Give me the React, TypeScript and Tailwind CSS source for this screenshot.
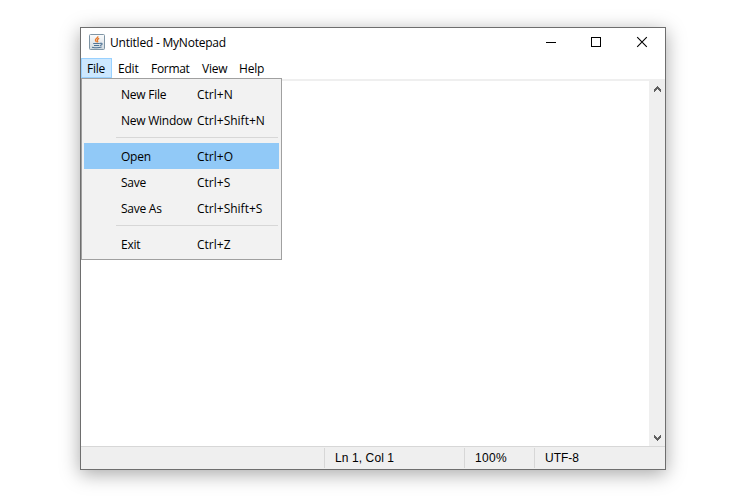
const ui = "font-['Open_Sans','Noto_Sans',sans-serif]";

type Entry = { label: string; keys: string; active?: boolean };

const groups: Entry[][] = [
  [
    { label: 'New File', keys: 'Ctrl+N' },
    { label: 'New Window', keys: 'Ctrl+Shift+N' },
  ],
  [
    { label: 'Open', keys: 'Ctrl+O', active: true },
    { label: 'Save', keys: 'Ctrl+S' },
    { label: 'Save As', keys: 'Ctrl+Shift+S' },
  ],
  [{ label: 'Exit', keys: 'Ctrl+Z' }],
];

function JavaIcon() {
  return (
    <svg width="16" height="16" viewBox="0 0 16 16" fill="none" className="mb-[1px] block">
      <defs>
        <linearGradient id="tile" x1="0" y1="0" x2="0" y2="1">
          <stop offset="0" stopColor="#fbfcfd" />
          <stop offset="1" stopColor="#cfd8df" />
        </linearGradient>
      </defs>
      <rect x=".5" y=".5" width="15" height="15" rx="1" fill="url(#tile)" stroke="#7f95a5" />
      <path d="M8.8 2.2C9.4 4 6.2 4.4 6.4 6.2C6.6 7 7.2 7.4 7.4 8.2M10.2 4.4C8.6 5 7.8 6 8.6 7C9 7.6 8.7 8 8.4 8.4" stroke="#e87a2c" strokeWidth="1.3" />
      <path d="M4.2 9.5H10.6M5 11.5H10.2M3 13.2C5.6 13.8 10.4 13.8 12.6 13M10.8 9.4C14 8.5 13.8 11 11 11.5" stroke="#4f7496" strokeWidth="1.1" />
    </svg>
  );
}

function TitleBar() {
  return (
    <div className="flex h-[29px] items-center pl-2">
      <JavaIcon />
      <span className={`${ui} ml-[5px] mt-px text-[12px] leading-[16px] tracking-[-0.22px]`}>Untitled - MyNotepad</span>
      <svg width="138" height="29" viewBox="0 0 138 29" fill="none" stroke="#000" className="ml-auto" shapeRendering="crispEdges">
        <path d="M19 14.5h10" />
        <rect x="64.5" y="9.5" width="9" height="9" />
        <path d="M110.2 9.2l9.6 9.6M119.8 9.2l-9.6 9.6" shapeRendering="auto" strokeWidth="1.1" />
      </svg>
    </div>
  );
}

function FileMenu() {
  return (
    <div className="absolute left-0 top-[21px] w-[201px] border border-[#a0a0a0] bg-[#f2f2f2] p-[2px]">
      {groups.map((group, i) => (
        <div key={i}>
          {i > 0 && (
            <div className="h-[10px] pl-8 pr-px pt-1">
              <div className="h-px bg-[#d7d7d7]" />
            </div>
          )}
          {group.map((e) => (
            <div key={e.label} className={`flex h-[26px] w-[195px] items-center whitespace-nowrap pl-[37px] pt-[2px] ${e.active ? 'bg-[#91c9f7]' : ''}`}>
              <span className="w-[76px] tracking-[-0.25px]">{e.label}</span>
              <span className="tracking-normal">{e.keys}</span>
            </div>
          ))}
        </div>
      ))}
    </div>
  );
}

function MenuBar() {
  return (
    <div className={`${ui} relative z-10 flex h-[22px] pt-px text-[12px] leading-[22px] tracking-[-0.22px]`}>
      <div className="h-5 w-[31px] border border-[#99d1ff] bg-[#cce8ff] pl-[5px] leading-[20px]">File</div>
      <div className="w-[33px] pl-[6px]">Edit</div>
      <div className="w-[51px] pl-[6px] tracking-[-0.3px]">Format</div>
      <div className="w-[37px] pl-[6px]">View</div>
      <div className="pl-[6px]">Help</div>
      <FileMenu />
    </div>
  );
}

function Arrow({ down = false }: { down?: boolean }) {
  return (
    <svg width="7" height="6" viewBox="0 0 7 6" className={down ? 'rotate-180' : ''} shapeRendering="crispEdges">
      <path d="M3 0h1v1h1v1h1v1h1v3h-1v-1h-1v-1h-1v-1h-1v1h-1v1h-1v1h-1v-3h1v-1h1v-1h1z" fill="#606060" />
    </svg>
  );
}

export default function App() {
  return (
    <div className="h-[500px] w-[750px] overflow-hidden bg-white pl-20 pt-[27px] text-black">
      <div className="flex h-[443px] w-[586px] flex-col border border-[#6e6e6e] bg-white shadow-[0_4px_18px_rgba(0,0,0,0.35)]">
        <TitleBar />
        <MenuBar />
        <div className="flex flex-1">
          <div className="flex-1 border-t-2 border-[#efefef]" />
          <div className="flex w-4 flex-col items-center justify-between bg-[#efefef] pb-[5px] pt-[7px]">
            <Arrow />
            <Arrow down />
          </div>
        </div>
        <div className="flex h-[23px] border-t border-[#d7d7d7] bg-[#efefef] py-px pl-[243px] font-['Liberation_Sans',sans-serif] text-[12px] leading-[20px] tracking-[0.1px]">
          <div className="w-[140px] border-l border-[#d7d7d7] pl-[10px]">Ln 1, Col 1</div>
          <div className="w-[70px] border-l border-[#d7d7d7] pl-[10px] tracking-[0.3px]">100%</div>
          <div className="border-l border-[#d7d7d7] pl-[10px] tracking-normal">UTF-8</div>
        </div>
      </div>
    </div>
  );
}
